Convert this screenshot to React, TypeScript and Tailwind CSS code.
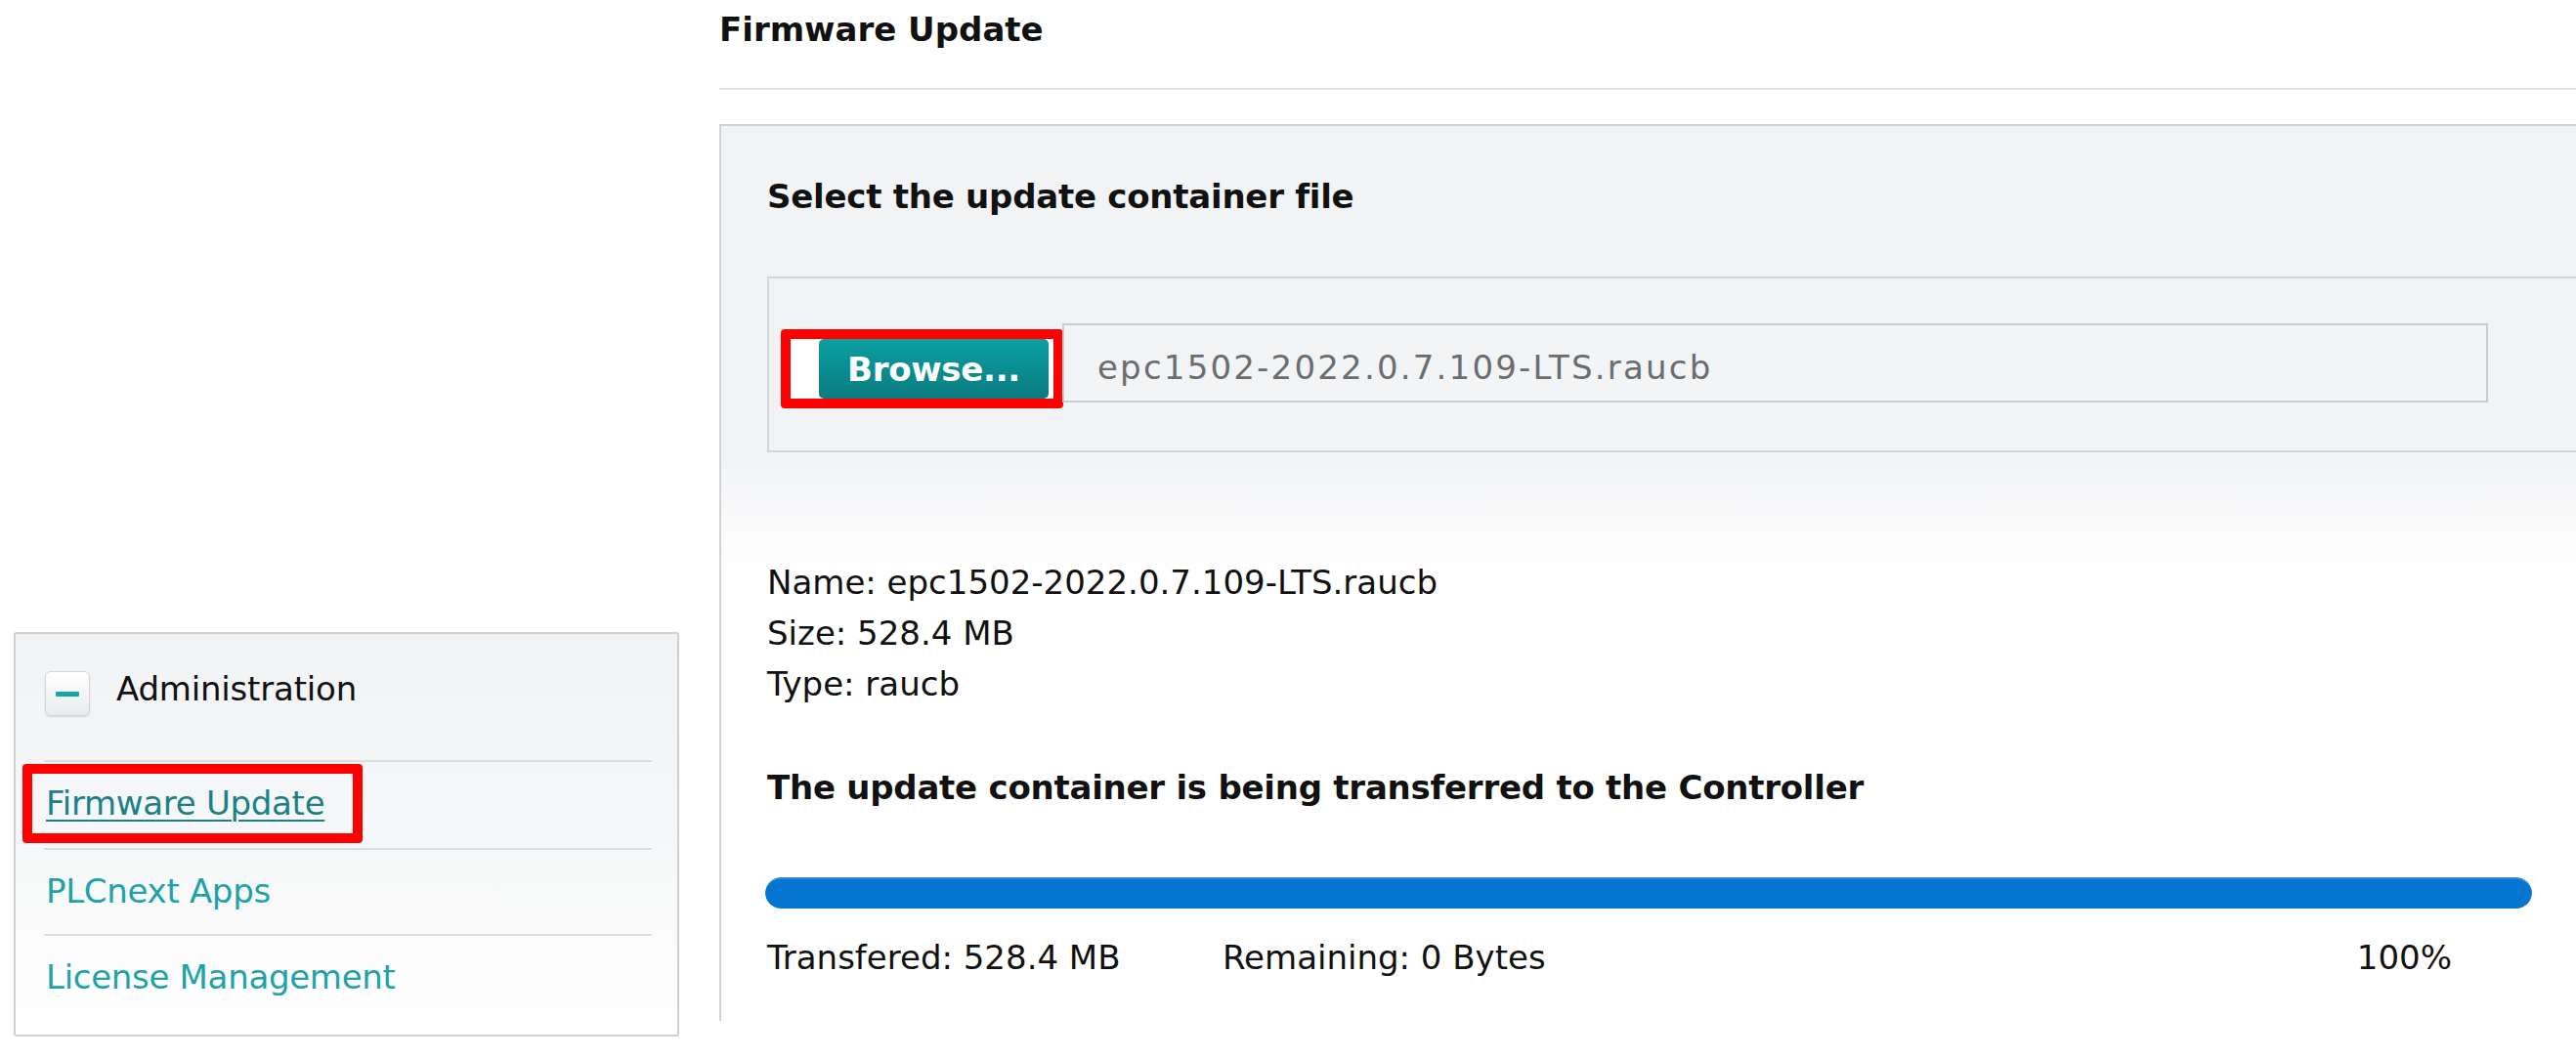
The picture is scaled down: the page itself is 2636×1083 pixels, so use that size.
const font = "font-['DejaVu_Sans',Verdana,sans-serif]";

function SideNav() {
    const links = [
        { label: 'Firmware Update', active: true, pb: 'pb-[26px]' },
        { label: 'PLCnext Apps', active: false, pb: 'pb-[24px]' },
        { label: 'License Management', active: false, pb: 'pb-[39px]' },
    ];

    return (
        <div className="relative w-[681px] border-2 border-[#cfd0d2] rounded-[3px] bg-[linear-gradient(to_bottom,#f2f3f5_0%,#f6f7f8_50%,#ffffff_100%)]">
            {/* Header */}
            <div className="flex items-center pt-[36px] pl-[30px]">
                <button className="flex items-center justify-center w-[46px] h-[46px] rounded-[6px] border border-[#d3d5d8] bg-[linear-gradient(to_bottom,#ffffff,#e9ebed)] shadow-[0_1px_2px_rgba(0,0,0,0.12)]">
                    <span className="block w-[24px] h-[5px] rounded-[1px] bg-[#16a3a9]" />
                </button>
                <span className="ml-[27px] mb-[10px] text-[34px] leading-[40px] text-[#111] tracking-[-0.2px]">Administration</span>
            </div>

            {/* Links */}
            <div className="mt-[43px] ml-[29px] mr-[26px]">
                {links.map((l) => (
                    <div key={l.label} className={`border-t-2 border-[#dcdddf] pt-[22px] pl-[2px] ${l.pb}`}>
                        <a
                            href="#"
                            className={
                                l.active
                                    ? 'text-[34px] leading-[40px] tracking-[-0.3px] text-[#1c8087] underline decoration-2 underline-offset-[5px]'
                                    : 'text-[34px] leading-[40px] tracking-[-0.3px] text-[#1fa2a8]'
                            }
                        >
                            {l.label}
                        </a>
                    </div>
                ))}
            </div>

            {/* annotation box */}
            <div className="absolute left-[7px] top-[133px] w-[348px] h-[81px] border-[10px] border-[#fe0000] rounded-[4px]" />
        </div>
    );
}

function FileSelect() {
    return (
        <div className="mt-[62px] border-t-2 border-l-2 border-b-2 border-[#d4d6d9] bg-[#f2f3f5] pt-[46px] pl-[12px] pb-[43px]">
            <div className="flex items-start">
                <div className="mt-[6px] flex border-[10px] border-[#fe0000] rounded-[4px] bg-white pl-[29px] pr-[5px]">
                    <button className="w-[235px] h-[61px] rounded-[5px] bg-[linear-gradient(to_bottom,#0a9fa3,#0b7c80)] text-white font-bold text-[34px] leading-[40px] tracking-[-0.3px]">
                        Browse...
                    </button>
                </div>
                <div className="-ml-[1px] w-[1459px] h-[81px] border-2 border-[#c9cbce] bg-[#f3f4f6] pl-[34px] pt-[23px]">
                    <span className="text-[34px] leading-[40px] tracking-[2.2px] text-[#6b6d70]">
                        epc1502-2022.0.7.109-LTS.raucb
                    </span>
                </div>
            </div>
        </div>
    );
}

export default function App() {
    const percent = 100;

    return (
        <div className={`${font} w-[2636px] h-[1083px] bg-white overflow-hidden flex text-[#111]`}>
            {/* Sidebar */}
            <div className="w-[736px] shrink-0 pt-[647px] pl-[14px]">
                <SideNav />
            </div>

            {/* Main */}
            <div className="flex-1 pt-[10px]">
                <h1 className="text-[34px] leading-[40px] font-bold">Firmware Update</h1>
                <div className="mt-[40px] h-[2px] bg-[#dfe0e2]" />

                <div className="mt-[35px] border-t-2 border-l-2 border-[#d2d3d5] pl-[47px] pt-[52px] pb-[45px] bg-[linear-gradient(to_bottom,#f2f3f5_0%,#f2f3f5_37%,#ffffff_50%,#ffffff_100%)]">
                    <h2 className="text-[34px] leading-[40px] font-bold tracking-[-0.25px]">Select the update container file</h2>

                    <FileSelect />

                    <div className="pr-[45px]">
                        <div className="mt-[107px] text-[34px] leading-[52px]">
                            <div>Name: epc1502-2022.0.7.109-LTS.raucb</div>
                            <div>Size: 528.4 MB</div>
                            <div>Type: raucb</div>
                        </div>

                        <div className="mt-[60px] text-[34px] leading-[40px] font-bold tracking-[-0.25px]">
                            The update container is being transferred to the Controller
                        </div>

                        <div className="mt-[72px] -ml-[2px] h-[32px] rounded-full bg-[#e6e8ea] overflow-hidden">
                            <div
                                className="h-full rounded-full bg-[#0475d1] shadow-[inset_0_2px_0_rgba(255,255,255,0.18)]"
                                style={{ width: `${percent}%` }}
                            />
                        </div>

                        <div className="mt-[30px] flex text-[34px] leading-[40px]">
                            <div className="w-[466px]">Transfered: 528.4 MB</div>
                            <div className="flex-1">Remaining: 0 Bytes</div>
                            <div className="mr-[82px]">{percent}%</div>
                        </div>
                    </div>
                </div>
            </div>
        </div>
    );
}
